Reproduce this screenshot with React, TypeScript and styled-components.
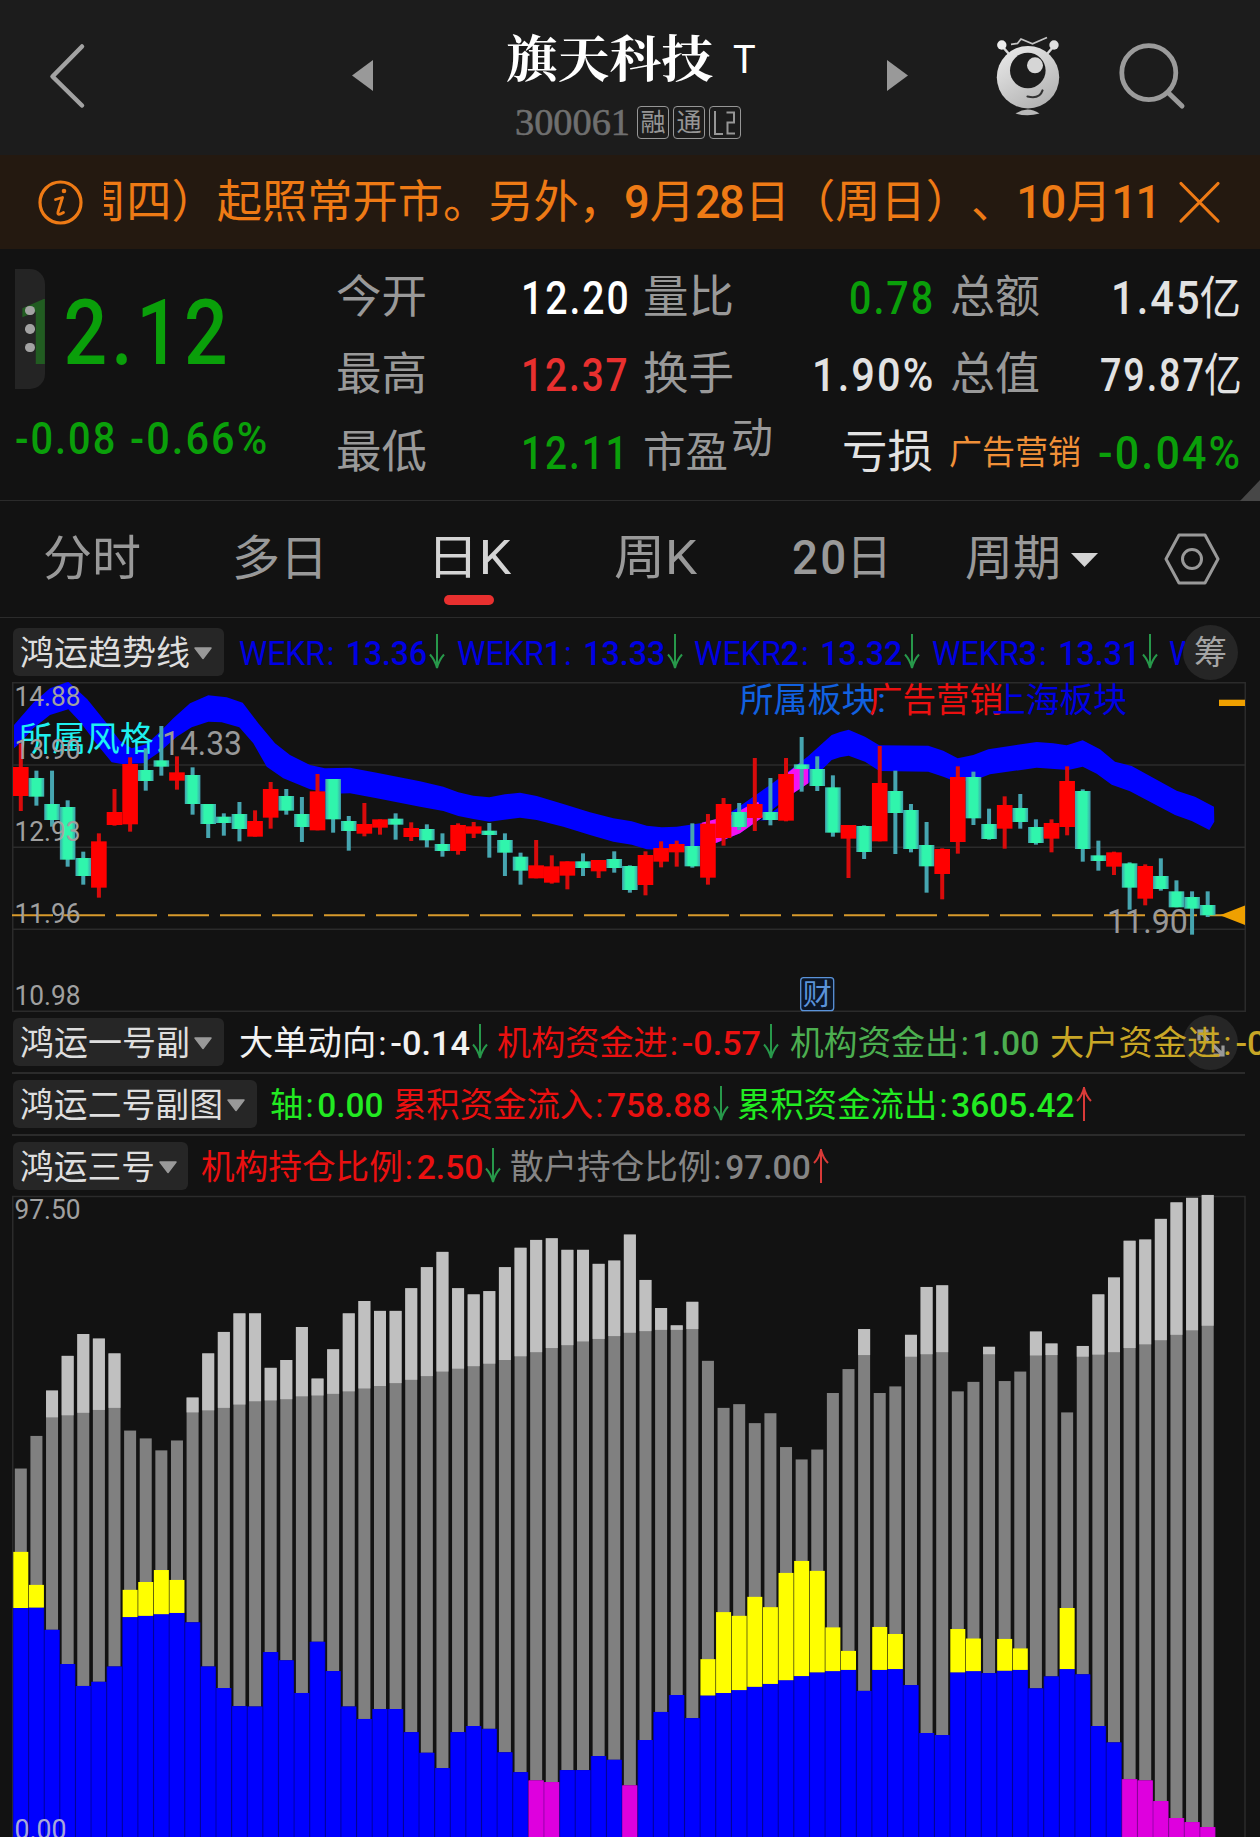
import React, { useLayoutEffect, useRef, useState } from "react";
import styled, { createGlobalStyle } from "styled-components";

const SANS = `Roboto, "Noto Sans CJK SC", sans-serif`;
const UP = "#e8302f";
const DOWN = "#0a9f0a";
const MUTED = "#999999";
const LIGHT = "#e2e2e2";
const RED = "#ea1010";
const BLUE = "#0000e4";
const LINE = "#2b2b2b";

const Global = createGlobalStyle`
  html, body { margin: 0; background: #121212; }
  * { box-sizing: border-box; }
`;

const Page = styled.div`
  width: 1260px;
  height: 1837px;
  overflow: hidden;
  display: flex;
  flex-direction: column;
  background: #121212;
  color: ${MUTED};
  font-family: ${SANS};
  text-spacing-trim: space-all;
`;

/* ---------- text set to an exact measure ---------- */

const Measure = styled.div<{ $w: number; $ml: number }>`
  flex: none;
  width: ${(p) => p.$w}px;
  margin-left: ${(p) => p.$ml}px;
`;

const Glyphs = styled.span<{ $size: number; $color?: string; $weight: number; $font: string; $lh: number }>`
  display: inline-block;
  vertical-align: top;
  white-space: pre;
  transform-origin: 0 50%;
  font-family: ${(p) => p.$font};
  font-size: ${(p) => p.$size}px;
  font-weight: ${(p) => p.$weight};
  line-height: ${(p) => p.$lh}px;
  color: ${(p) => p.$color ?? "inherit"};
`;

const Digits = styled.span<{ $track: number }>`
  font-weight: 500;
  letter-spacing: ${(p) => p.$track}em;
  margin-right: ${(p) => -p.$track}em;
`;

const Colon = styled.span`
  margin: 0 0.11em 0 0.06em;
`;

type FitProps = {
  w: number;
  size: number;
  ml?: number;
  color?: string;
  weight?: number;
  font?: string;
  lh?: number;
  track?: number;
  plain?: boolean;
  children: string;
};

function Fit({ w, size, ml = 0, color, weight = 400, font = SANS, lh = 50, track = 0.05, plain, children }: FitProps) {
  const ref = useRef<HTMLSpanElement>(null);
  const [scale, setScale] = useState(1);
  useLayoutEffect(() => {
    const width = ref.current?.offsetWidth ?? w;
    setScale(w / width);
  }, [w, size, children]);
  const parts = plain ? [children] : children.split(/([-0-9.%]+|:)/).filter(Boolean);
  return (
    <Measure $w={w} $ml={ml}>
      <Glyphs
        ref={ref}
        $size={size}
        $color={color}
        $weight={weight}
        $font={font}
        $lh={lh}
        style={{ transform: `scaleX(${scale})` }}
      >
        {parts.map((part, i) => {
          if (plain) return part;
          if (part === ":") return <Colon key={i}>:</Colon>;
          return /^[-0-9.%]+$/.test(part) ? <Digits key={i} $track={track}>{part}</Digits> : part;
        })}
      </Glyphs>
    </Measure>
  );
}

/* ---------- header ---------- */

const Header = styled.header`
  flex: none;
  height: 155px;
  display: flex;
  align-items: flex-start;
  background: #1c1c1c;
`;

const HeaderIcon = styled.svg<{ $ml: number; $mt: number }>`
  flex: none;
  display: block;
  margin: ${(p) => p.$mt}px 0 0 ${(p) => p.$ml}px;
`;

const TitleBlock = styled.div`
  flex: none;
  width: 270px;
  margin-left: 125px;
  padding-top: 26px;
`;

const TitleRow = styled.div`
  display: flex;
  align-items: flex-start;
  height: 58px;
  padding-left: 8px;
`;

const CodeRow = styled.div`
  display: flex;
  align-items: flex-start;
  gap: 4px;
  margin-top: 22px;
  padding-left: 17px;
`;

const Code = styled.div`
  -webkit-text-stroke: 0.6px #6f6f6f;
`;

const Tag = styled.span<{ $first?: boolean }>`
  flex: none;
  display: flex;
  align-items: center;
  justify-content: center;
  width: 32px;
  height: 33px;
  margin-left: ${(p) => (p.$first ? 3 : 0)}px;
  border: 1.5px solid #969696;
  border-radius: 4px;
  color: #969696;
  font-size: 25px;
  line-height: 30px;
`;

function HeaderBar() {
  return (
    <Header>
      <HeaderIcon $ml={48} $mt={42} width={38} height={68} viewBox="48 42 38 68">
        <path d="M82 46.500L52.500 76.500L82 105.500" fill="none" stroke="#a2a2a2" strokeWidth={4.500} strokeLinecap="round" strokeLinejoin="round" />
      </HeaderIcon>
      <HeaderIcon $ml={266} $mt={60} width={21} height={31} viewBox="0 0 21 31">
        <path d="M21 0V31L0 15.500Z" fill={MUTED} />
      </HeaderIcon>
      <TitleBlock>
        <TitleRow>
          <Fit plain w={207} size={50} weight={700} color="#fff" font={`"Noto Serif CJK SC", "Noto Sans CJK SC", serif`} lh={58}>旗天科技</Fit>
          <Fit plain w={23} size={38} ml={20} color="#fff" lh={68}>T</Fit>
        </TitleRow>
        <CodeRow>
          <Code>
            <Fit plain w={115} size={38} color="#6f6f6f" font={`"Liberation Serif", serif`} lh={33}>300061</Fit>
          </Code>
          <Tag $first>融</Tag>
          <Tag>通</Tag>
          <Tag>
            <svg width={26} height={26} viewBox="0 0 26 26" fill="none" stroke="#969696" strokeWidth={2}>
              <path d="M3 1V24H11M14.500 2.500H22V12.500H15.500V23.500H23" />
            </svg>
          </Tag>
        </CodeRow>
      </TitleBlock>
      <HeaderIcon $ml={119} $mt={60} width={21} height={31} viewBox="0 0 21 31">
        <path d="M0 0V31L21 15.500Z" fill={MUTED} />
      </HeaderIcon>
      <HeaderIcon $ml={84} $mt={34} width={72} height={84} viewBox="992 34 72 84">
        <defs>
          <linearGradient id="mascot" x1="0" y1="0" x2="0.6" y2="1">
            <stop offset="0" stopColor="#ececec" />
            <stop offset="0.45" stopColor="#d4d4d4" />
            <stop offset="1" stopColor="#b4b4b4" />
          </linearGradient>
        </defs>
        <path d="M1011 44.300L1017.500 43.500L1021 39L1032.500 43.800L1047 37.500" fill="none" stroke="#c4c4c4" strokeWidth={1.800} />
        <path d="M1002 46L1009 54M1054 46L1047 54" stroke="#d8d8d8" strokeWidth={2.500} />
        <circle cx={1001.800} cy={45} r={4.700} fill="#ededed" />
        <circle cx={1054} cy={45} r={4.700} fill="#e0e0e0" />
        <circle cx={1028} cy={77.200} r={31.200} fill="url(#mascot)" />
        <circle cx={1027.800} cy={70.500} r={17.800} fill="#1c1c1c" />
        <circle cx={1035} cy={65.300} r={8} fill="#d6d6d6" />
        <path d="M1027.500 96.500Q1039.500 99.500 1042.500 90.500" fill="none" stroke="#333" strokeWidth={2.200} strokeLinecap="round" />
        <path d="M1015.500 113.500Q1027.500 105.500 1039.500 113.500Q1027.500 117 1015.500 113.500Z" fill="#b9b9b9" />
      </HeaderIcon>
      <HeaderIcon $ml={52} $mt={40} width={72} height={72} viewBox="1116 40 72 72">
        <circle cx={1148.800} cy={72.700} r={27} fill="none" stroke="#9b9b9b" strokeWidth={4.800} />
        <path d="M1168.500 93L1182 106" stroke="#9b9b9b" strokeWidth={5} strokeLinecap="round" />
      </HeaderIcon>
    </Header>
  );
}

/* ---------- notice ---------- */

const ORANGE = "#ee7a15";

const Notice = styled.div`
  flex: none;
  display: flex;
  align-items: center;
  height: 94px;
  padding: 0 39px 0 37px;
  background: #241910;
  color: ${ORANGE};
`;

const Ticker = styled.div`
  width: 1059px;
  height: 60px;
  margin: 0 14px 0 20px;
  overflow: hidden;
`;

function NoticeBar() {
  return (
    <Notice>
      <svg width={47} height={47} viewBox="0 0 47 47">
        <circle cx={23.500} cy={23.500} r={20.500} fill="none" stroke={ORANGE} strokeWidth={3.200} />
        <circle cx={27} cy={12} r={2.300} fill={ORANGE} />
        <path d="M18.500 20.500L25.500 18.500L21 33Q20 37.500 26.500 33.500" fill="none" stroke={ORANGE} strokeWidth={2.800} strokeLinecap="round" strokeLinejoin="round" />
      </svg>
      <Ticker>
        <Fit w={1080} ml={-23} size={45.500} lh={62} track={-0.035}>周四）起照常开市。另外，9月28日（周日）、10月11</Fit>
      </Ticker>
      <svg width={44} height={44} viewBox="0 0 44 44" stroke={ORANGE} strokeWidth={3.200} strokeLinecap="round">
        <path d="M4 3.500L41 41M41 3.500L4 41" />
      </svg>
    </Notice>
  );
}

/* ---------- quote ---------- */

const Quote = styled.section`
  position: relative;
  flex: none;
  display: flex;
  height: 252px;
  border-bottom: 1px solid ${LINE};
`;

const PriceCol = styled.div`
  position: relative;
  flex: none;
  width: 336px;
  padding-top: 40px;
`;

const ChangeRow = styled.div`
  display: flex;
`;

const Handle = styled.div`
  position: absolute;
  left: 15px;
  top: 20px;
  width: 30px;
  height: 120px;
  display: flex;
  flex-direction: column;
  align-items: center;
  justify-content: center;
  gap: 9px;
  border-radius: 0 15px 15px 0;
  background: rgba(48, 48, 48, 0.6);
`;

const HandleDot = styled.i`
  width: 9.5px;
  height: 9.5px;
  border-radius: 50%;
  background: #a3a3a3;
`;

const Stats = styled.div`
  flex: none;
  padding-top: 10px;
`;

const StatRow = styled.div`
  display: flex;
  align-items: center;
  height: 77.5px;
`;

const Super = styled.div`
  flex: none;
  margin-bottom: 27px;
`;

const Corner = styled.svg`
  position: absolute;
  right: 0;
  bottom: -1px;
`;

function QuotePanel() {
  return (
    <Quote>
      <PriceCol>
        <Fit w={212} ml={16} size={90} lh={90} color={DOWN}>12.12</Fit>
        <ChangeRow>
          <Fit w={100} ml={15} size={44.500} lh={121} color={DOWN}>-0.08</Fit>
          <Fit w={137} ml={15} size={44.500} lh={121} color={DOWN}>-0.66%</Fit>
        </ChangeRow>
        <Handle>
          <HandleDot />
          <HandleDot />
          <HandleDot />
        </Handle>
      </PriceCol>
      <Stats>
        <StatRow>
          <Fit w={91} size={45}>今开</Fit>
          <Fit w={108} ml={94} size={46} color="#fff">12.20</Fit>
          <Fit w={91} ml={14} size={45}>量比</Fit>
          <Fit w={84} ml={115} size={46} color={DOWN}>0.78</Fit>
          <Fit w={90} ml={17} size={45}>总额</Fit>
          <Fit w={130} ml={71} size={46} color={LIGHT}>1.45亿</Fit>
        </StatRow>
        <StatRow>
          <Fit w={91} size={45}>最高</Fit>
          <Fit w={107} ml={94} size={46} color={UP}>12.37</Fit>
          <Fit w={91} ml={15} size={45}>换手</Fit>
          <Fit w={121} ml={78} size={46} color={LIGHT}>1.90%</Fit>
          <Fit w={90} ml={17} size={45}>总值</Fit>
          <Fit w={142} ml={60} size={46} color={LIGHT}>79.87亿</Fit>
        </StatRow>
        <StatRow>
          <Fit w={91} size={45}>最低</Fit>
          <Fit w={107} ml={94} size={46} color={DOWN}>12.11</Fit>
          <Fit w={85} ml={15} size={42}>市盈</Fit>
          <Super>
            <Fit w={42} ml={3} size={42}>动</Fit>
          </Super>
          <Fit w={91} ml={69} size={45} color={LIGHT}>亏损</Fit>
          <Fit w={132} ml={16} size={33} lh={50} color="#f09038">广告营销</Fit>
          <Fit w={142} ml={17} size={46} color={DOWN}>-0.04%</Fit>
        </StatRow>
      </Stats>
      <Corner width={20} height={21} viewBox="0 0 20 21">
        <path d="M20 0V21H0Z" fill="#474747" />
      </Corner>
    </Quote>
  );
}

/* ---------- period tabs ---------- */

const Tabs = styled.nav`
  flex: none;
  display: flex;
  height: 117px;
  padding-top: 32px;
  border-bottom: 1px solid ${LINE};
`;

const Tab = styled.div<{ $ml: number; $active?: boolean }>`
  flex: none;
  display: flex;
  flex-direction: column;
  align-items: center;
  margin-left: ${(p) => p.$ml}px;
  color: ${(p) => (p.$active ? "#d4d4d4" : MUTED)};
`;

const ActiveMark = styled.div`
  width: 50px;
  height: 10px;
  margin: 12px 0 0;
  border-radius: 5px;
  background: ${UP};
`;

const TabIcon = styled.svg<{ $ml: number; $mt: number }>`
  flex: none;
  margin: ${(p) => p.$mt}px 0 0 ${(p) => p.$ml}px;
`;

function PeriodTabs() {
  return (
    <Tabs>
      <Tab $ml={43}><Fit w={98} size={48} lh={52}>分时</Fit></Tab>
      <Tab $ml={91}><Fit w={96} size={48} lh={52}>多日</Fit></Tab>
      <Tab $ml={99} $active>
        <Fit w={84} size={48}>日K</Fit>
        <ActiveMark />
      </Tab>
      <Tab $ml={103}><Fit w={83} size={48}>周K</Fit></Tab>
      <Tab $ml={95}><Fit w={100} size={48}>20日</Fit></Tab>
      <Tab $ml={73}><Fit w={96} size={48} lh={52}>周期</Fit></Tab>
      <TabIcon $ml={10} $mt={20} width={27} height={14} viewBox="0 0 27 14">
        <path d="M0 0H27L13.500 14Z" fill="#d4d4d4" />
      </TabIcon>
      <TabIcon $ml={66} $mt={0} width={56} height={52} viewBox="0 0 56 52" fill="none" stroke={MUTED} strokeWidth={3}>
        <path d="M15 2H41L54 26L41 50H15L2 26Z" strokeLinejoin="round" />
        <circle cx={28} cy={26} r={9.500} />
      </TabIcon>
    </Tabs>
  );
}

/* ---------- indicator rows ---------- */

const IndRow = styled.div<{ $h: number; $pt: number; $line?: boolean }>`
  position: relative;
  isolation: isolate;
  flex: none;
  display: flex;
  align-items: flex-start;
  height: ${(p) => p.$h}px;
  margin: 0 15px 0 12px;
  padding: ${(p) => p.$pt}px 0 0 1px;
  border-bottom: ${(p) => (p.$line ? `2px solid ${LINE}` : "none")};
`;

const Pill = styled.div<{ $w: number }>`
  flex: none;
  display: flex;
  align-items: center;
  width: ${(p) => p.$w}px;
  height: 48px;
  padding-top: 2px;
  border-radius: 6px;
  background: #262626;
  color: #dedede;
`;

const Caret = styled.svg`
  flex: none;
  margin-left: 3px;
`;

const ArrowSvg = styled.svg`
  flex: none;
  margin: 6px 0 0 1px;
`;

const Round = styled.div<{ $top: number }>`
  position: absolute;
  left: 1171px;
  top: ${(p) => p.$top}px;
  width: 55px;
  height: 55px;
  display: flex;
  align-items: center;
  justify-content: center;
  border-radius: 50%;
  background: #262626;
  color: #a5a5a5;
  font-size: 33px;
  line-height: 57px;
`;

const GlassRound = styled(Round)`
  z-index: -1;
`;

function Arrow({ up }: { up?: boolean }) {
  return (
    <ArrowSvg width={18} height={36} viewBox="0 0 18 36" fill="none" stroke={up ? "#d93a38" : "#27984a"} strokeWidth={2}>
      {up ? <path d="M9 35V1M2 15Q7 10 9 2Q11 10 16 15" /> : <path d="M9 0V34M2 20.500Q7 26 9 34Q11 26 16 20.500" />}
    </ArrowSvg>
  );
}

function Selector({ w, tw, children }: { w: number; tw: number; children: string }) {
  return (
    <Pill $w={w}>
      <Fit w={tw} ml={7} size={34}>{children}</Fit>
      <Caret width={20} height={13} viewBox="0 0 20 13">
        <path d="M2 1H18L10 11.500Z" fill={MUTED} stroke={MUTED} strokeWidth={1.500} strokeLinejoin="round" />
      </Caret>
    </Pill>
  );
}

function Reading({ w, ml, color, children }: { w: number; ml: number; color: string; children: string }) {
  return (
    <Fit w={w} ml={ml} size={34} color={color} track={0}>{children}</Fit>
  );
}

/* ---------- candlestick chart ---------- */

const PITCH = 15.617;
const FIRST = 20.800;
const cx = (i: number) => FIRST + i * PITCH;
const py = (v: number) => 620 + v / 3;

// colour, high, body top, body bottom, low
type Candle = ["R" | "G", number, number, number, number];
const CANDLES: Candle[] = [
  ["R", 370, 441, 528, 573], ["G", 452, 474, 530, 557], ["G", 452, 552, 600, 620], ["G", 541, 561, 719, 740],
  ["G", 695, 714, 768, 794], ["R", 640, 664, 803, 833], ["R", 507, 576, 615, 617], ["R", 412, 432, 613, 635],
  ["G", 385, 450, 483, 512], ["G", 318, 421, 440, 467], ["R", 409, 457, 482, 509], ["G", 442, 465, 552, 584],
  ["G", 552, 552, 612, 654], ["G", 580, 590, 609, 647], ["G", 546, 582, 627, 664], ["R", 571, 603, 650, 650],
  ["R", 486, 507, 593, 626], ["G", 507, 528, 572, 584], ["G", 531, 582, 621, 666], ["R", 462, 514, 631, 631],
  ["G", 477, 477, 598, 638], ["G", 588, 603, 633, 692], ["R", 549, 612, 641, 649], ["R", 598, 598, 623, 644],
  ["G", 580, 596, 614, 659], ["R", 607, 624, 651, 663], ["G", 613, 627, 661, 682], ["G", 640, 672, 693, 710],
  ["R", 610, 615, 693, 704], ["R", 606, 619, 641, 654], ["G", 609, 632, 645, 713], ["G", 640, 660, 698, 768],
  ["G", 698, 710, 752, 794], ["R", 660, 736, 775, 775], ["R", 706, 739, 788, 791], ["R", 724, 724, 767, 808],
  ["G", 700, 724, 744, 768], ["R", 720, 720, 754, 774], ["G", 694, 717, 744, 758], ["G", 736, 738, 810, 818],
  ["R", 694, 705, 795, 826], ["R", 664, 684, 725, 742], ["R", 662, 672, 697, 740], ["G", 610, 678, 739, 743],
  ["R", 582, 611, 773, 794], ["R", 534, 552, 654, 677], ["G", 549, 576, 621, 630], ["R", 414, 552, 594, 633],
  ["G", 474, 576, 600, 616], ["R", 414, 462, 602, 604], ["G", 351, 433, 447, 515], ["G", 409, 447, 498, 513],
  ["G", 466, 502, 638, 650], ["R", 615, 615, 656, 774], ["G", 616, 618, 696, 717], ["R", 378, 489, 664, 664],
  ["G", 452, 513, 579, 702], ["G", 552, 570, 687, 697], ["G", 606, 675, 739, 818], ["R", 685, 687, 762, 838],
  ["R", 439, 471, 666, 701], ["G", 455, 471, 595, 615], ["G", 566, 612, 657, 659], ["R", 529, 555, 626, 686],
  ["G", 522, 564, 606, 626], ["G", 598, 621, 669, 674], ["R", 598, 609, 656, 697], ["R", 439, 483, 621, 646],
  ["G", 508, 513, 687, 725], ["G", 662, 706, 723, 752], ["R", 695, 697, 740, 765], ["G", 727, 730, 803, 869],
  ["R", 733, 738, 836, 856], ["G", 715, 768, 807, 812], ["G", 781, 814, 862, 862], ["G", 814, 831, 866, 944],
  ["G", 814, 855, 886, 891],
];

type Pt = [number, number];
const BAND: Pt[] = [
  [42, 315], [100, 248], [150, 205], [205, 185], [262, 238], [320, 310], [360, 362], [395, 385], [440, 372],
  [480, 335], [520, 295], [570, 250], [625, 226], [680, 232], [728, 248], [775, 310], [825, 370], [870, 405],
  [930, 435], [975, 445], [1050, 443], [1130, 458], [1260, 484], [1330, 500], [1375, 517], [1420, 527],
  [1468, 532], [1515, 523], [1560, 518], [1610, 528], [1690, 552], [1770, 577], [1840, 595], [1895, 604],
  [1940, 617], [1985, 622], [2030, 620], [2120, 607], [2160, 597], [2210, 565], [2310, 495], [2360, 458],
  [2425, 408], [2495, 345], [2520, 336], [2546, 329], [2595, 350], [2638, 376], [2785, 377], [2830, 392],
  [2873, 415], [2920, 405], [2965, 388], [3110, 366], [3160, 370], [3200, 376], [3248, 361], [3300, 388],
  [3345, 425], [3395, 438], [3530, 512], [3585, 530], [3642, 560], [3643, 605], [3628, 630], [3575, 603],
  [3525, 585], [3390, 514], [3335, 494], [3290, 461], [3248, 440], [3205, 450], [3110, 443], [2970, 463],
  [2920, 482], [2865, 484], [2830, 470], [2785, 455], [2638, 453], [2595, 425], [2546, 407], [2520, 412],
  [2495, 420], [2450, 465], [2425, 490], [2380, 520], [2290, 590], [2220, 640], [2150, 668], [2060, 684],
  [1985, 690], [1940, 688], [1895, 674], [1840, 665], [1770, 645], [1690, 620], [1610, 600], [1560, 593],
  [1468, 605], [1420, 597], [1375, 588], [1330, 573], [1260, 560], [1130, 535], [1050, 520], [1000, 521],
  [930, 508], [850, 475], [800, 440], [760, 370], [718, 322], [665, 307], [625, 305], [575, 322], [530, 350],
  [480, 395], [430, 430], [365, 432], [335, 427], [290, 372], [240, 305], [205, 268], [150, 285], [100, 325],
  [60, 370], [42, 385],
];
const CROSS_A: Pt[] = [[2105, 608], [2148, 597], [2195, 585], [2240, 560], [2275, 545], [2290, 590], [2220, 640], [2150, 668], [2105, 675]];
const CROSS_B: Pt[] = [[2355, 464], [2400, 430], [2425, 446], [2425, 490], [2380, 520], [2355, 530]];
const toPoints = (pts: Pt[]) => pts.map(([x, v]) => `${(x / 3).toFixed(1)},${py(v).toFixed(1)}`).join(" ");

const Chart = styled.svg`
  flex: none;
  display: block;
  font-family: ${SANS};
`;

type LabelProps = { x: number; y: number; w: number; size: number; fill: string; children: string };
function Label({ x, y, w, size, fill, children }: LabelProps) {
  return (
    <text x={x} y={y} fontSize={size} fill={fill} textLength={w} lengthAdjust="spacingAndGlyphs">
      {children}
    </text>
  );
}

function KLine() {
  return (
    <Chart width={1260} height={330} viewBox="0 682 1260 330">
      <defs>
        <linearGradient id="fall">
          <stop offset="0" stopColor="#3f9fae" />
          <stop offset="0.25" stopColor="#30f5ac" />
          <stop offset="0.75" stopColor="#30f5ac" />
          <stop offset="1" stopColor="#3f9fae" />
        </linearGradient>
      </defs>
      <g stroke={LINE} strokeWidth={1.500} fill="none">
        <rect x={12.750} y={682.750} width={1232.500} height={328.500} />
        <path d="M13 765H1245M13 847.300H1245M13 929.300H1245" />
      </g>
      <polygon points={toPoints(BAND)} fill="#0000ff" />
      <polygon points={toPoints(CROSS_A)} fill="#f312f3" />
      <polygon points={toPoints(CROSS_B)} fill="#f312f3" />
      <polygon points="760,820.500 785,803 785,810 770,820" fill="#0000ff" />
      <Label x={18.500} y={750.500} w={135} size={34} fill="#1ff0f0">所属风格</Label>
      <Label x={156} y={752} w={9} size={34} fill="#1ff0f0">:</Label>
      <path d="M12 915.300H1245" stroke="#d89a2c" strokeWidth={2} strokeDasharray="41 11" />
      {CANDLES.map(([c, hi, top, bot, lo], i) => (
        <g key={i} fill={c === "R" ? "#ff0000" : "url(#fall)"}>
          <rect x={cx(i) - 2} y={py(hi)} width={4} height={(lo - hi) / 3} fill={c === "R" ? "#d90b0b" : "#46a5b0"} />
          <rect x={cx(i) - 7.800} y={py(top)} width={15.600} height={(bot - top) / 3} />
        </g>
      ))}
      <Label x={14.500} y={706} w={66} size={28.500} fill="#a0a0a0">14.88</Label>
      <Label x={14.500} y={759} w={66} size={28.500} fill="#a0a0a0">13.90</Label>
      <Label x={14.500} y={841} w={66} size={28.500} fill="#a0a0a0">12.93</Label>
      <Label x={14.500} y={923} w={66} size={28.500} fill="#a0a0a0">11.96</Label>
      <Label x={14.500} y={1005} w={66} size={28.500} fill="#a0a0a0">10.98</Label>
      <Label x={162} y={755} w={80} size={34} fill={MUTED}>14.33</Label>
      <Label x={1107} y={932.700} w={81} size={34} fill={MUTED}>11.90</Label>
      <Label x={739.500} y={711.500} w={136} size={34} fill="#1161e0">所属板块</Label>
      <Label x={877} y={711.500} w={9} size={34} fill="#1161e0">:</Label>
      <Label x={869} y={711.500} w={134} size={34} fill={RED}>广告营销</Label>
      <Label x={992} y={711.500} w={135} size={34} fill={BLUE}>上海板块</Label>
      <rect x={1219} y={699.700} width={26} height={6.300} fill="#efa000" />
      <path d="M1220 915.300L1245 905.500V925Z" fill="#efa000" />
      <rect x={800.700} y={977.700} width={33} height={33} rx={3} fill="#0c1626" stroke="#5a93da" strokeWidth={1.300} />
      <text x={817.200} y={1005} fontSize={29} textAnchor="middle" fill="#5a93da">财</text>
    </Chart>
  );
}

/* ---------- holdings chart ---------- */

const K = 2.4235;
const hy = (v: number) => 1190 + v / K;

// top, light/dark split, yellow top, base top, base is magenta
type Bar = [number, number, number, number, number?];
const BARS: Bar[] = [
  [675, 0, 877, 1013], [596, 0, 957, 1012], [486, 551, 0, 1066], [402, 546, 0, 1149], [349, 540, 0, 1202],
  [360, 533, 0, 1192], [396, 528, 0, 1155], [583, 0, 969, 1035], [602, 0, 950, 1032], [631, 0, 921, 1028],
  [607, 0, 945, 1025], [503, 539, 0, 1048], [396, 534, 0, 1155], [344, 528, 0, 1207], [299, 520, 0, 1251],
  [299, 512, 0, 1252], [431, 510, 0, 1120], [412, 507, 0, 1140], [332, 500, 0, 1219], [457, 498, 0, 1095],
  [386, 494, 0, 1166], [299, 488, 0, 1252], [269, 481, 0, 1282], [293, 475, 0, 1258], [293, 468, 0, 1258],
  [238, 460, 0, 1314], [187, 451, 0, 1364], [150, 440, 0, 1401], [238, 433, 0, 1314], [253, 427, 0, 1299],
  [245, 421, 0, 1306], [187, 412, 0, 1363], [140, 403, 0, 1411], [121, 393, 0, 1431, 1], [117, 383, 0, 1435, 1],
  [145, 376, 0, 1406], [145, 367, 0, 1406], [179, 361, 0, 1372], [171, 354, 0, 1381], [108, 346, 0, 1443, 1],
  [218, 342, 0, 1333], [286, 339, 0, 1265], [328, 339, 0, 1224], [271, 337, 0, 1280], [414, 0, 1137, 1225],
  [528, 0, 1023, 1219], [519, 0, 1032, 1212], [565, 0, 986, 1204], [541, 0, 1011, 1197], [623, 0, 928, 1188],
  [653, 0, 899, 1178], [629, 0, 923, 1169], [492, 0, 1060, 1166], [434, 0, 1117, 1163], [337, 400, 0, 1214],
  [492, 0, 1059, 1163], [476, 0, 1076, 1161], [351, 404, 0, 1200], [235, 398, 0, 1316], [231, 393, 0, 1321],
  [488, 0, 1064, 1169], [465, 0, 1087, 1166], [380, 398, 0, 1171], [463, 0, 1088, 1165], [440, 0, 1111, 1163],
  [343, 401, 0, 1208], [372, 400, 0, 1179], [539, 0, 1013, 1161], [378, 404, 0, 1174], [253, 399, 0, 1299],
  [212, 393, 0, 1339], [123, 383, 0, 1428, 1], [120, 374, 0, 1431, 1], [70, 364, 0, 1481, 1],
  [30, 351, 0, 1522, 1], [19, 340, 0, 1532, 1], [12, 329, 0, 1544, 1],
];

function Holdings() {
  return (
    <Chart width={1260} height={643} viewBox="0 1194 1260 643">
      <path d="M12.750 1840V1196.500H1245V1840" fill="none" stroke={LINE} strokeWidth={1.500} />
      {BARS.map(([top, split, yellow, base, magenta], i) => {
        const x = cx(i);
        return (
          <g key={i}>
            <rect x={x - 6} y={hy(top)} width={12} height={(base - top) / K} fill="#808080" />
            {split > 0 && <rect x={x - 6} y={hy(top)} width={12} height={(split - top) / K} fill="#c0c0c0" />}
            <rect x={x - 7.900} y={hy(base)} width={15.700} height={660} fill={magenta ? "#a800b8" : "#0000b8"} />
            <rect x={x - 7.200} y={hy(base)} width={14.400} height={660} fill={magenta ? "#de00de" : "#0000ff"} />
            {yellow > 0 && <rect x={x - 7.500} y={hy(yellow)} width={15} height={(base - yellow) / K} fill="#ffff00" />}
          </g>
        );
      })}
      <Label x={14.500} y={1219} w={66} size={28.500} fill="#a0a0a0">97.50</Label>
      <Label x={14.500} y={1839} w={52} size={28.500} fill="#a8a8d8">0.00</Label>
    </Chart>
  );
}

export default function App() {
  return (
    <Page>
      <Global />
      <HeaderBar />
      <NoticeBar />
      <QuotePanel />
      <PeriodTabs />
      <IndRow $h={64} $pt={10}>
        <Selector w={211} tw={170}>鸿运趋势线</Selector>
        <Reading w={188} ml={15} color={BLUE}>WEKR: 13.36</Reading>
        <Arrow />
        <Reading w={208} ml={11} color={BLUE}>WEKR1: 13.33</Reading>
        <Arrow />
        <Reading w={208} ml={10} color={BLUE}>WEKR2: 13.32</Reading>
        <Arrow />
        <Reading w={208} ml={11} color={BLUE}>WEKR3: 13.31</Reading>
        <Arrow />
        <Reading w={29} ml={10} color={BLUE}>W</Reading>
        <Round $top={7}>筹</Round>
      </IndRow>
      <KLine />
      <IndRow $h={62} $pt={6} $line>
        <Selector w={211} tw={170}>鸿运一号副</Selector>
        <Reading w={231} ml={15} color="#f2f2f2">大单动向:-0.14</Reading>
        <Arrow />
        <Reading w={264} ml={8} color={RED}>机构资金进:-0.57</Reading>
        <Arrow />
        <Reading w={249} ml={10} color="#4cae50">机构资金出:1.00</Reading>
        <Reading w={265} ml={11} color="#c8a626">大户资金进:-0.43</Reading>
        <GlassRound $top={3}>
          <svg width={30} height={30} viewBox="0 0 30 30" fill="none" stroke="#999" strokeWidth={3.200}>
            <path d="M12.500 3H3V12.500M3 3L12.500 12.500M27 17.500V27H17.500M27 27L17.500 17.500" />
          </svg>
        </GlassRound>
      </IndRow>
      <IndRow $h={62} $pt={6} $line>
        <Selector w={244} tw={203}>鸿运二号副图</Selector>
        <Reading w={113} ml={13} color="#22ea22">轴:0.00</Reading>
        <Reading w={318} ml={10} color={RED}>累积资金流入:758.88</Reading>
        <Arrow />
        <Reading w={337} ml={7} color="#22ea22">累积资金流出:3605.42</Reading>
        <Arrow up />
      </IndRow>
      <IndRow $h={58} $pt={6}>
        <Selector w={175} tw={135}>鸿运三号</Selector>
        <Reading w={282} ml={13} color={RED}>机构持仓比例:2.50</Reading>
        <Arrow />
        <Reading w={301} ml={8} color="#858585">散户持仓比例:97.00</Reading>
        <Arrow up />
      </IndRow>
      <Holdings />
    </Page>
  );
}
